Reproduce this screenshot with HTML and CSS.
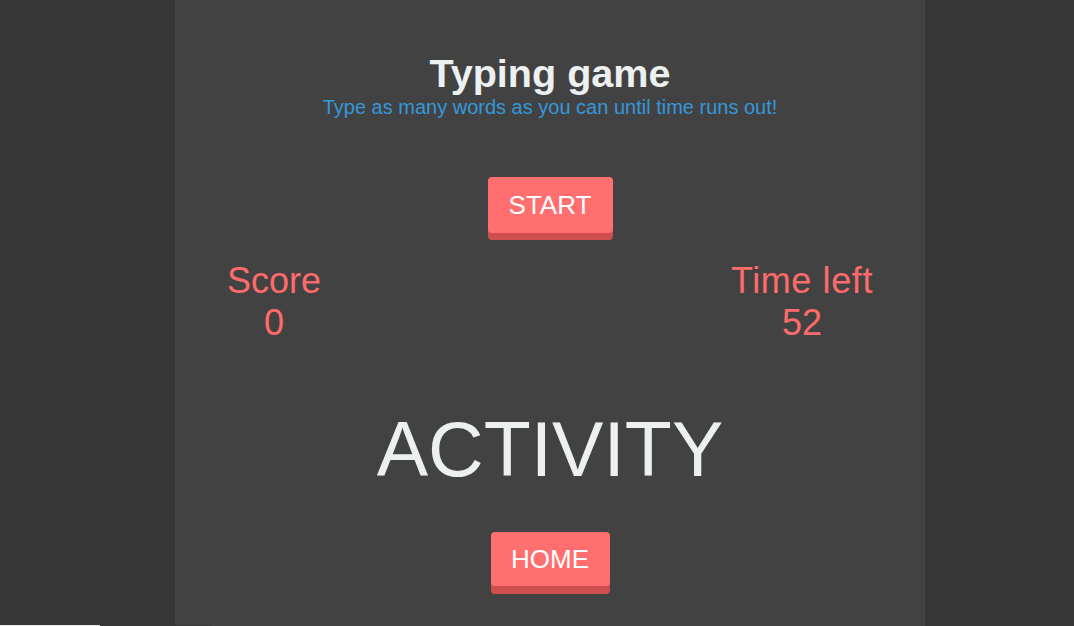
FILE: index.html
```html
<!DOCTYPE html>
<html lang="en">
<head>
<meta charset="utf-8">
<title>Typing game</title>
<link rel="stylesheet" href="styles.css">
</head>
<body>
<main class="panel">
  <h1 class="title">Typing game</h1>
  <p class="subtitle">Type as many words as you can until time runs out!</p>
  <button class="btn btn-start">START</button>
  <div class="stats">
    <div class="stat">
      <div class="stat-label">Score</div>
      <div class="stat-value">0</div>
    </div>
    <div class="stat">
      <div class="stat-label stat-label-wide">Time left</div>
      <div class="stat-value">52</div>
    </div>
  </div>
  <div class="word">ACTIVITY</div>
  <button class="btn btn-home">HOME</button>
</main>
<div class="edge edge-light"></div>
<div class="edge edge-dark"></div>
</body>
</html>
```
FILE: styles.css
```css
html, body {
  margin: 0;
  padding: 0;
  height: 100%;
  overflow: hidden;
}
body {
  background: #363636;
  font-family: "Liberation Sans", Arial, sans-serif;
}
.panel {
  width: 750px;
  margin: 0 0 0 175px;
  min-height: 100%;
  background: #424242;
  display: flex;
  flex-direction: column;
  align-items: center;
  padding-top: 51px;
  box-sizing: border-box;
}
.title {
  margin: 0;
  font-size: 39.6px;
  font-weight: bold;
  color: #ecf0f1;
  line-height: normal;
}
.subtitle {
  margin: 0;
  font-size: 20px;
  color: #3498db;
  line-height: normal;
}
.btn {
  font-family: "Liberation Sans", Arial, sans-serif;
  background: #ff6f6f;
  color: #ffffff;
  border: none;
  border-radius: 4px;
  box-shadow: 0 7px 0 #cf4f4f;
  padding: 0 20px;
  cursor: pointer;
}
.btn-start {
  margin-top: 58px;
  height: 56px;
  line-height: 56px;
  font-size: 26px;
  width: 125px;
  padding: 0;
}
.stats {
  align-self: stretch;
  display: flex;
  justify-content: space-between;
  padding: 0 52px;
  margin-top: 27px;
}
.stat {
  text-align: center;
  color: #ff6b6b;
  font-size: 36px;
  line-height: normal;
}
.stat-label-wide {
  letter-spacing: 0.6px;
}
.word {
  margin-top: 61px;
  font-size: 77px;
  color: #ecf0f1;
  line-height: normal;
}
.btn-home {
  margin-top: 38px;
  height: 54px;
  line-height: 54px;
  font-size: 26px;
  width: 119px;
  padding: 0;
  box-shadow: 0 8px 0 #cf4f4f;
}
.edge {
  position: fixed;
  bottom: 0;
  height: 1px;
}
.edge-light {
  left: 0;
  width: 100px;
  background: #e6e6e6;
}
.edge-dark {
  left: 175px;
  width: 37px;
  background: #363636;
}
```
